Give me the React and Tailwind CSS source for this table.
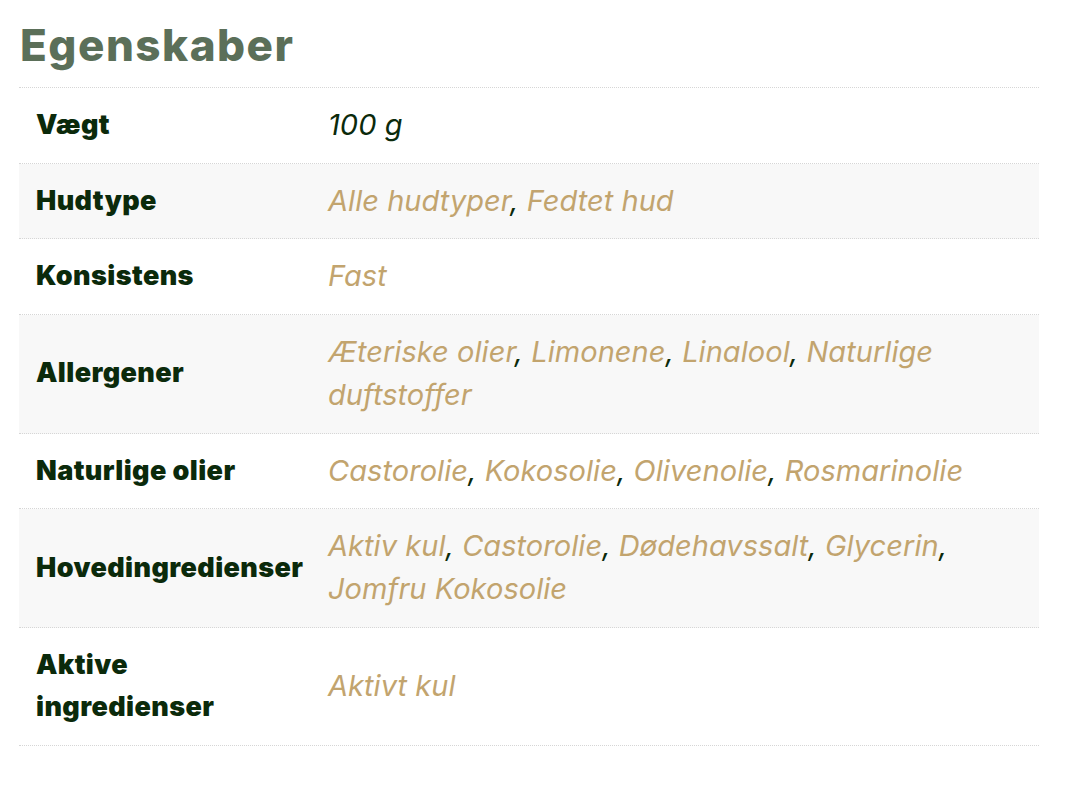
import React from 'react';

const rows = [
    { label: 'Vægt', values: ['100 g'], plain: true },
    { label: 'Hudtype', values: ['Alle hudtyper', 'Fedtet hud'] },
    { label: 'Konsistens', values: ['Fast'] },
    { label: 'Allergener', values: ['Æteriske olier', 'Limonene', 'Linalool', 'Naturlige duftstoffer'] },
    { label: 'Naturlige olier', values: ['Castorolie', 'Kokosolie', 'Olivenolie', 'Rosmarinolie'] },
    { label: 'Hovedingredienser', values: ['Aktiv kul', 'Castorolie', 'Dødehavssalt', 'Glycerin', 'Jomfru Kokosolie'] },
    { label: 'Aktive ingredienser', values: ['Aktivt kul'] },
];

function Row({ row, striped }) {
    return (
        <div className={`grid grid-cols-[293px_1fr] border-b border-dotted border-[#d6d6d6] ${striped ? 'bg-[#f8f8f8]' : 'bg-white'}`}>
            <div className="flex items-center pl-[17px] pr-1 py-4 text-[27px] leading-[42.7px] font-black text-[#0b2a0b] tracking-[0.4px]">
                {row.label}
            </div>
            <div className="flex items-center pl-[16px] pr-4 py-4">
                <p className="text-[29px] leading-[42.7px] italic text-[#0b2a0b] tracking-[0.05px]">
                    {row.plain
                        ? row.values[0]
                        : row.values.map((v, i) => (
                            <React.Fragment key={v}>
                                <span className="text-[#c2a46e]">{v}</span>
                                {i < row.values.length - 1 && ', '}
                            </React.Fragment>
                        ))}
                </p>
            </div>
        </div>
    );
}

export default function App() {
    return (
        <div className="min-h-screen bg-white pl-[19px] pr-[39px] pt-[17px]" style={{ fontFamily: 'Inter, "Noto Sans", sans-serif' }}>
            <h2 className="text-[44px] leading-[56px] font-extrabold text-[#5b6f59] pl-[1px] tracking-[1.5px]">Egenskaber</h2>
            <div className="mt-[14px] border-t border-dotted border-[#d6d6d6]">
                {rows.map((r, i) => (
                    <Row key={r.label} row={r} striped={i % 2 === 1} />
                ))}
            </div>
        </div>
    );
}
